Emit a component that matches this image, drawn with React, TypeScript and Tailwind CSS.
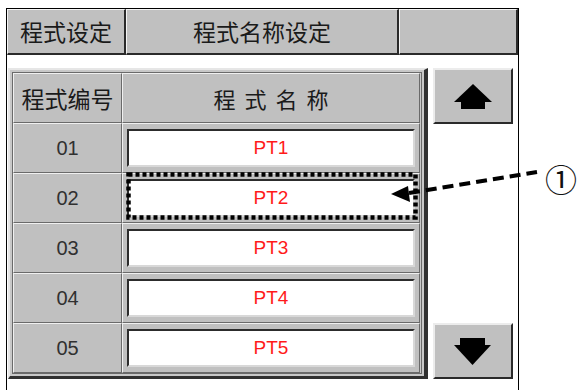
import React from "react";

const rows = ["01", "02", "03", "04", "05"];

const raised =
  "bg-[#c0c0c0] border-t border-l border-t-[#f4f4f4] border-l-[#f4f4f4] border-r-2 border-b-2 border-r-[#2a2a2a] border-b-[#2a2a2a]";

const cell =
  "bg-[#c0c0c0] border-t border-l border-t-[#f0f0f0] border-l-[#f0f0f0] border-r border-b border-r-[#6a6a6a] border-b-[#6a6a6a]";

function UpArrow() {
  return (
    <svg width="38" height="25" viewBox="0 0 38 25">
      <polygon points="19,0 0,18 38,18" fill="#000" />
      <rect x="7" y="17" width="24" height="8" fill="#000" />
    </svg>
  );
}

function DownArrow() {
  return (
    <svg width="38" height="27" viewBox="0 0 38 27">
      <rect x="6" y="0" width="25" height="8" fill="#000" />
      <polygon points="0,7 37,7 18.5,27" fill="#000" />
    </svg>
  );
}

export default function App() {
  const cjk = { fontFamily: '"Noto Sans CJK SC", "Noto Sans", sans-serif' };
  const latin = { fontFamily: '"Liberation Sans", Arial, sans-serif' };

  return (
    <div className="relative w-[577px] h-[390px] overflow-hidden bg-white">
      <div className="ml-[6px] mt-[8px] w-[513px] h-[400px] border border-black flex flex-col">
        {/* tab bar */}
        <div className="flex h-[46px] text-[23px] text-[#1a1a1a]" style={cjk}>
          <div className={`${raised} w-[119px] flex items-center justify-center`}>程式设定</div>
          <div className={`${raised} w-[273px] flex items-center justify-center`}>程式名称设定</div>
          <div className={`${raised} flex-1`}></div>
        </div>

        <div className="flex mt-[13px] pl-[1px]">
          {/* table panel */}
          <div className="w-[420px] bg-[#c8c8c8] border-t-2 border-l-2 border-t-[#e6e6e6] border-l-[#e6e6e6] border-r-4 border-b-[3px] border-r-[#303030] border-b-[#303030] p-[2px]">
            <div className="border border-[#6a6a6a] grid grid-cols-[109px_298px]">
              <div className={`${cell} h-[50px] flex items-center justify-center text-[23px] text-[#1a1a1a]`} style={cjk}>
                程式编号
              </div>
              <div className={`${cell} h-[50px] flex items-center justify-center gap-[9px] text-[22px] text-[#1a1a1a]`} style={cjk}>
                <span>程</span>
                <span>式</span>
                <span>名</span>
                <span>称</span>
              </div>
              {rows.map((n, i) => (
                <React.Fragment key={n}>
                  <div className={`${cell} h-[50px] flex items-center justify-center text-[20px] text-[#303030]`} style={latin}>
                    {n}
                  </div>
                  <div className={`${cell} h-[50px] flex items-center px-[4px] py-[5px]`}>
                    <div
                      className="flex-1 h-[38px] bg-white border-t-2 border-l-2 border-t-[#2c2c2c] border-l-[#2c2c2c] border-r-2 border-b-2 border-r-[#d8d8d8] border-b-[#d8d8d8] flex items-center justify-center text-[19px] text-[#ff1a1a]"
                      style={latin}
                    >
                      {"PT" + (i + 1)}
                    </div>
                  </div>
                </React.Fragment>
              ))}
            </div>
          </div>

          {/* scroll buttons */}
          <div className="ml-[5px] w-[80px] flex flex-col justify-between">
            <div className="h-[56px] bg-[#c0c0c0] border-t-2 border-l-2 border-t-[#ececec] border-l-[#ececec] border-r-2 border-b-2 border-r-[#2a2a2a] border-b-[#2a2a2a] flex items-center justify-center">
              <UpArrow />
            </div>
            <div className="h-[56px] bg-[#c0c0c0] border-t-2 border-l-2 border-t-[#ececec] border-l-[#ececec] border-r-2 border-b-2 border-r-[#2a2a2a] border-b-[#2a2a2a] flex items-center justify-center">
              <DownArrow />
            </div>
          </div>
        </div>
      </div>

      {/* annotation overlay */}
      <svg className="absolute left-0 top-0 pointer-events-none" width="577" height="390" viewBox="0 0 577 390">
        <rect x="128.5" y="174.5" width="287" height="43" fill="none" stroke="#000" strokeWidth="4.5" strokeDasharray="4 3" />
        <line x1="409" y1="193" x2="537" y2="172" stroke="#000" strokeWidth="4" strokeDasharray="11 6" />
        <polygon points="391,194 408,186 410,202" fill="#000" />
      </svg>
      <div
        className="absolute left-[545px] top-[162px] text-[32px] leading-none text-[#111]"
        style={{ fontFamily: '"Noto Sans CJK JP", "DejaVu Serif", serif' }}
      >
        ①
      </div>
    </div>
  );
}
